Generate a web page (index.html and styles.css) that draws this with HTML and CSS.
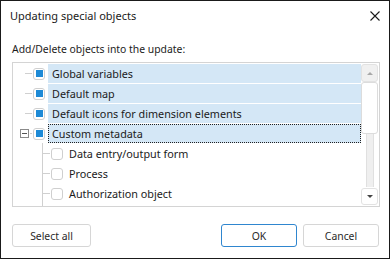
FILE: index.html
```html
<!DOCTYPE html>
<html lang="en">
<head>
  <meta charset="UTF-8" />
  <title>Updating special objects</title>
  <link rel="stylesheet" href="styles.css">
</head>
<body>
  <div class="dialog">
    <div class="titlebar">
      <span class="title">Updating special objects</span>
      <button class="close" title="Close">
        <svg width="10" height="10" viewBox="0 0 10 10">
          <path d="M0.5 0.5 L9.5 9.5 M9.5 0.5 L0.5 9.5" stroke="#1a1a1a" stroke-width="1.1" fill="none"/>
        </svg>
      </button>
    </div>

    <div class="content">
      <p class="caption">Add/Delete objects into the update:</p>

      <div class="tree">
        <div class="nodes">
          <div class="row">
            <span class="twig"><span class="dash"></span></span>
            <span class="check on"></span>
            <span class="label sel">Global variables</span>
          </div>
          <div class="row">
            <span class="twig"><span class="dash"></span></span>
            <span class="check on"></span>
            <span class="label sel">Default map</span>
          </div>
          <div class="row">
            <span class="twig"><span class="dash"></span></span>
            <span class="check on"></span>
            <span class="label sel">Default icons for dimension elements</span>
          </div>
          <div class="row">
            <span class="twig"><span class="expander"></span><span class="dash short"></span></span>
            <span class="check on"></span>
            <span class="label sel focus">Custom metadata</span>
          </div>
          <div class="children">
            <div class="row">
              <span class="branch"></span>
              <span class="check"></span>
              <span class="label">Data entry/output form</span>
            </div>
            <div class="row">
              <span class="branch"></span>
              <span class="check"></span>
              <span class="label">Process</span>
            </div>
            <div class="row">
              <span class="branch"></span>
              <span class="check"></span>
              <span class="label">Authorization object</span>
            </div>
          </div>
        </div>

        <div class="scrollbar">
          <div class="arrow up"><span></span></div>
          <div class="thumb"></div>
          <div class="track"></div>
          <div class="arrow down"><span></span></div>
        </div>
      </div>
    </div>

    <div class="footer">
      <button class="btn wide">Select all</button>
      <div class="right">
        <button class="btn default">OK</button>
        <button class="btn">Cancel</button>
      </div>
    </div>
  </div>
</body>
</html>
```

FILE: styles.css
```css
body {
  margin: 0;
  background-color: #fff;
  font-family: "Noto Sans", "Open Sans", sans-serif;
  font-size: 10.4px;
  color: #1b1b1b;
}

.dialog {
  width: 390px;
  height: 259px;
  box-sizing: border-box;
  border: 1px solid #1a1a1a;
  background-color: #fff;
  display: flex;
  flex-direction: column;
}

.titlebar {
  height: 29px;
  display: flex;
  align-items: center;
  justify-content: space-between;
  padding: 0 9px 0 9px;
  font-size: 11px;
}

.close {
  width: 10px;
  height: 10px;
  padding: 0;
  border: none;
  background: none;
  display: flex;
}

.content {
  padding: 0 9px 0 11px;
}

.caption {
  margin: 0;
  height: 32px;
  line-height: 16px;
  padding-top: 11px;
  box-sizing: border-box;
}

.tree {
  width: 368px;
  height: 145px;
  box-sizing: border-box;
  border: 1px solid #d4d4d4;
  display: flex;
  padding: 1px 1px 0 0;
  overflow: hidden;
  font-size: 10.8px;
}

.nodes {
  flex: 1;
  display: flex;
  flex-direction: column;
  overflow: hidden;
}

.row {
  display: flex;
  align-items: center;
  height: 19px;
  margin-bottom: 1px;
  flex: none;
}

.twig {
  width: 20px;
  flex: none;
  display: flex;
  align-items: center;
  justify-content: flex-end;
}

.dash {
  width: 7px;
  height: 1px;
  margin-right: 1px;
  background-color: #d0d0d0;
}

.dash.short {
  width: 2px;
}

.expander {
  width: 9px;
  height: 9px;
  box-sizing: border-box;
  border: 1px solid #8a8a8a;
  margin-right: 1px;
  position: relative;
}

.expander::after {
  content: "";
  position: absolute;
  left: 1px;
  right: 1px;
  top: 3px;
  height: 1px;
  background-color: #555;
}

.check {
  width: 12px;
  height: 12px;
  flex: none;
  box-sizing: border-box;
  border: 1px solid #cfcfcf;
  border-radius: 3px;
  background-color: #fff;
  display: flex;
  align-items: center;
  justify-content: center;
}

.check.on::after {
  content: "";
  width: 7px;
  height: 7px;
  background-color: #1e8ad6;
}

.label {
  margin-left: 3px;
  padding-left: 4px;
  height: 19px;
  line-height: 19px;
  white-space: nowrap;
  box-sizing: border-box;
}

.label.sel {
  flex: 1;
  background-color: #d4e7f6;
}

.label.focus {
  border: 1px dotted #222;
  padding-left: 3px;
  line-height: 17px;
}

.children {
  flex: 1;
  margin-left: 29px;
  border-left: 1px solid #d0d0d0;
  margin-top: -1px;
  padding-top: 1px;
}

.branch {
  width: 7px;
  height: 1px;
  flex: none;
  background-color: #d0d0d0;
  margin-right: 1px;
}

.children .label {
  margin-left: 2px;
  padding-left: 4px;
}

.scrollbar {
  width: 17px;
  flex: none;
  display: flex;
  flex-direction: column;
  align-items: center;
  padding-bottom: 1px;
}

.arrow {
  width: 17px;
  height: 18px;
  box-sizing: border-box;
  border: 1px solid #e2e2e2;
  border-radius: 3px;
  display: flex;
  align-items: center;
  justify-content: center;
  flex: none;
}

.arrow span {
  width: 0;
  height: 0;
  border-left: 3px solid transparent;
  border-right: 3px solid transparent;
}

.arrow.up {
  background-color: #f0f0f0;
}

.arrow.up span {
  border-bottom: 3px solid #a8a8a8;
}

.arrow.down {
  height: 17px;
  background-color: #fff;
}

.arrow.down span {
  border-top: 3px solid #444;
}

.thumb {
  width: 17px;
  height: 52px;
  box-sizing: border-box;
  border: 1px solid #dcdcdc;
  border-radius: 3px;
  background-color: #fff;
  flex: none;
}

.track {
  width: 8px;
  flex: 1;
  box-sizing: border-box;
  background-color: #efefef;
  border-left: 1px solid #e0e0e0;
  border-right: 1px solid #e0e0e0;
  margin-bottom: 1px;
}

.footer {
  display: flex;
  justify-content: space-between;
  padding: 17px 10px 0 11px;
}

.right {
  display: flex;
  gap: 6px;
}

.btn {
  height: 23px;
  width: 76px;
  box-sizing: border-box;
  border: 1px solid #d6d6d6;
  border-radius: 3px;
  background-color: #fff;
  font-family: inherit;
  font-size: 10.4px;
  color: #2a2a2a;
  padding: 0;
}

.btn.wide {
  width: 79px;
}

.btn.default {
  border-color: #2f86cf;
}
```
